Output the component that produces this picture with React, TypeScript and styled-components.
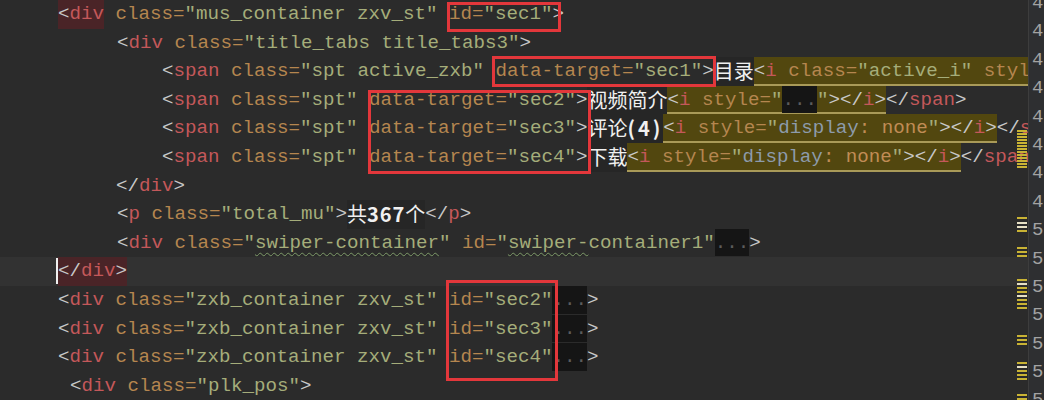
import React from 'react';
import styled, { createGlobalStyle } from 'styled-components';

const GlobalStyle = createGlobalStyle`
  html, body {
    margin: 0;
    padding: 0;
    background: #2b2b2b;
  }
`;

const LINE_H = 28.6;

const Editor = styled.div`
  display: flex;
  width: 1044px;
  height: 400px;
  overflow: hidden;
  background: #2b2b2b;
  font-family: "Liberation Mono", "DejaVu Sans Mono", monospace;
  font-size: 19.17px;
  color: #c9c9c9;
`;

const CodeArea = styled.div`
  position: relative;
  flex: 1;
  overflow: hidden;
  padding-left: 58px;
`;

const Line = styled.div<{ $indent: number; $current?: boolean }>`
  height: ${LINE_H}px;
  line-height: ${LINE_H}px;
  white-space: pre;
  margin-left: -58px;
  padding-left: ${p => 58 + p.$indent}px;
  background: ${p => (p.$current ? '#323232' : 'transparent')};
`;

const P = styled.span`
  color: #c8c8c8;
`;

const T = styled.span`
  color: #c4585a;
`;

const A = styled.span`
  color: #b5864f;
`;

const V = styled.span<{ $wavy?: boolean }>`
  color: #a5ad7a;
  text-decoration: ${p => (p.$wavy ? 'underline wavy #7d9a68' : 'none')};
  text-decoration-thickness: 1px;
  text-underline-offset: 4px;
`;

const CssProp = styled.span`
  color: #8d9bab;
`;

const CssVal = styled.span`
  color: #c08c55;
`;

const MatchTag = styled.span`
  background: #4a2427;
  display: inline-block;
  height: ${LINE_H}px;
`;

const Cjk = styled.span`
  font-family: "Noto Sans CJK SC", "Noto Sans", sans-serif;
  font-size: 20px;
  font-weight: 400;
  color: #f0f0f0;
  background: #262626;
  display: inline-block;
  height: ${LINE_H}px;
  vertical-align: top;
`;

const Num = styled.span<{ $spacing?: number }>`
  font-weight: 700;
  letter-spacing: ${p => p.$spacing ?? 0}px;
`;

const Hl = styled.span`
  display: inline-block;
  height: ${LINE_H - 2}px;
  background: #52470f;
  border-bottom: 2px solid #a99a58;
  vertical-align: top;
`;

const Fold = styled.span`
  display: inline-block;
  height: ${LINE_H - 1}px;
  background: #151515;
  color: #5c5c5c;
  vertical-align: top;
`;

const Caret = styled.span`
  display: inline-block;
  width: 0;
  height: 26px;
  border-left: 2px solid #f0f0f0;
  margin-left: -2px;
  vertical-align: middle;
`;

const RedBox = styled.div<{ $x: number; $y: number; $w: number; $h: number }>`
  position: absolute;
  left: ${p => p.$x}px;
  top: ${p => p.$y}px;
  width: ${p => p.$w}px;
  height: ${p => p.$h}px;
  box-sizing: border-box;
  border: 3px solid #e3373b;
  pointer-events: none;
`;

const Stripe = styled.div`
  position: absolute;
  right: 0;
  top: 0;
  width: 12px;
  height: 100%;
`;

const Mark = styled.div<{ $y: number; $white?: boolean }>`
  position: absolute;
  left: 1px;
  top: ${p => p.$y}px;
  width: 10px;
  height: 2px;
  background: ${p => (p.$white ? '#e6e0c4' : '#c9b334')};
`;

const Gutter = styled.div`
  width: 16px;
  flex-shrink: 0;
  border-left: 1px solid #3d3d3d;
  background: #2e2f31;
  overflow: hidden;
  padding-left: 3px;
  box-sizing: border-box;
`;

const GutterRows = styled.div`
  margin-top: -11px;
  display: flex;
  flex-direction: column;
`;

const LineNo = styled.div`
  height: 28.4px;
  line-height: 28.4px;
  color: #a3a3a3;
  font-size: 19px;
  white-space: pre;
  display: flex;
  align-items: center;
`;

const NumTail = styled.span`
  display: inline-block;
  width: 2px;
  height: 9px;
  margin-left: 1px;
  background: #3f7cc0;
`;

const marks: { y: number; white?: boolean }[] = [
  ...[130, 133, 136, 139, 142, 145, 148, 151, 154, 157, 160, 163, 166].map(y => ({ y })),
  { y: 217 }, { y: 222, white: true }, { y: 226, white: true }, { y: 230 },
  { y: 247 }, { y: 251 }, { y: 255 },
  { y: 279 }, { y: 283, white: true }, { y: 287 }, { y: 291 }, { y: 295, white: true },
  { y: 299 }, { y: 303 }, { y: 307 },
  { y: 335 }, { y: 339 }, { y: 343 },
  { y: 362 }, { y: 366, white: true }, { y: 370 }, { y: 374 }, { y: 378 },
  { y: 394 }, { y: 398 },
];

const gutterNums = ['4', '4', '4', '4', '4', '4', '4', '4', '5', '5', '5', '5', '5', '5', '5'];

const Open = ({ tag }: { tag: string }) => (
  <>
    <P>&lt;</P>
    <T>{tag}</T>
  </>
);

const Attr = ({ name, value }: { name: string; value: string }) => (
  <>
    {' '}
    <A>{name}=</A>
    <V>"{value}"</V>
  </>
);

const DisplayNone = () => (
  <Hl>
    <Open tag="i" />
    {' '}
    <A>style=</A>
    <V>"</V>
    <CssProp>display</CssProp>
    <CssVal>: none</CssVal>
    <V>"</V>
    <P>&gt;&lt;/</P>
    <T>i</T>
    <P>&gt;</P>
  </Hl>
);

export default function App() {
  return (
    <>
      <GlobalStyle />
      <Editor>
        <CodeArea>
          <Line $indent={0}>
            <MatchTag><Open tag="div" /></MatchTag>
            <Attr name="class" value="mus_container zxv_st" />
            <Attr name="id" value="sec1" />
            <P>&gt;</P>
          </Line>
          <Line $indent={59}>
            <Open tag="div" />
            <Attr name="class" value="title_tabs title_tabs3" />
            <P>&gt;</P>
          </Line>
          <Line $indent={104}>
            <Open tag="span" />
            <Attr name="class" value="spt active_zxb" />
            <Attr name="data-target" value="sec1" />
            <P>&gt;</P>
            <Cjk>目录</Cjk>
            <Hl>
              <Open tag="i" />
              <Attr name="class" value="active_i" />
              {' '}
              <A>style="display: none"</A>
            </Hl>
          </Line>
          <Line $indent={104}>
            <Open tag="span" />
            <Attr name="class" value="spt" />
            <Attr name="data-target" value="sec2" />
            <P>&gt;</P>
            <Cjk>视频简介</Cjk>
            <Hl>
              <Open tag="i" />
              {' '}
              <A>style=</A>
              <V>"</V>
              <Fold>...</Fold>
              <V>"</V>
              <P>&gt;&lt;/</P>
              <T>i</T>
              <P>&gt;</P>
            </Hl>
            <P>&lt;/</P>
            <T>span</T>
            <P>&gt;</P>
          </Line>
          <Line $indent={104}>
            <Open tag="span" />
            <Attr name="class" value="spt" />
            <Attr name="data-target" value="sec3" />
            <P>&gt;</P>
            <Cjk>评论<Num $spacing={3}>(4)</Num></Cjk>
            <DisplayNone />
            <P>&lt;/</P>
            <T>span</T>
            <P>&gt;</P>
          </Line>
          <Line $indent={104}>
            <Open tag="span" />
            <Attr name="class" value="spt" />
            <Attr name="data-target" value="sec4" />
            <P>&gt;</P>
            <Cjk>下载</Cjk>
            <DisplayNone />
            <P>&lt;/</P>
            <T>span</T>
            <P>&gt;</P>
          </Line>
          <Line $indent={58}>
            <P>&lt;/</P>
            <T>div</T>
            <P>&gt;</P>
          </Line>
          <Line $indent={59}>
            <Open tag="p" />
            <Attr name="class" value="total_mu" />
            <P>&gt;</P>
            <Cjk>共<Num $spacing={1}>367</Num>个</Cjk>
            <P>&lt;/</P>
            <T>p</T>
            <P>&gt;</P>
          </Line>
          <Line $indent={59}>
            <Open tag="div" />
            {' '}
            <A>class=</A>
            <V>"<V $wavy>swiper-container</V>"</V>
            {' '}
            <A>id=</A>
            <V>"<V $wavy>swiper-</V>container1"</V>
            <Fold>...</Fold>
            <P>&gt;</P>
          </Line>
          <Line $indent={0} $current>
            <Caret />
            <MatchTag>
              <P>&lt;/</P>
              <T>div</T>
              <P>&gt;</P>
            </MatchTag>
          </Line>
          {['sec2', 'sec3', 'sec4'].map(id => (
            <Line $indent={0} key={id}>
              <Open tag="div" />
              <Attr name="class" value="zxb_container zxv_st" />
              <Attr name="id" value={id} />
              <Fold>...</Fold>
              <P>&gt;</P>
            </Line>
          ))}
          <Line $indent={12}>
            <Open tag="div" />
            <Attr name="class" value="plk_pos" />
            <P>&gt;</P>
          </Line>

          <Stripe>
            {marks.map((m, i) => (
              <Mark key={i} $y={m.y} $white={m.white} />
            ))}
          </Stripe>

          <RedBox $x={447} $y={2} $w={114} $h={30} />
          <RedBox $x={492} $y={56} $w={224} $h={31} />
          <RedBox $x={368} $y={90} $w={223} $h={84} />
          <RedBox $x={446} $y={280} $w={112} $h={101} />
        </CodeArea>
        <Gutter>
          <GutterRows>
            {gutterNums.map((n, i) => (
              <LineNo key={i}>
                {n}
                {n === '5' && <NumTail />}
              </LineNo>
            ))}
          </GutterRows>
        </Gutter>
      </Editor>
    </>
  );
}
